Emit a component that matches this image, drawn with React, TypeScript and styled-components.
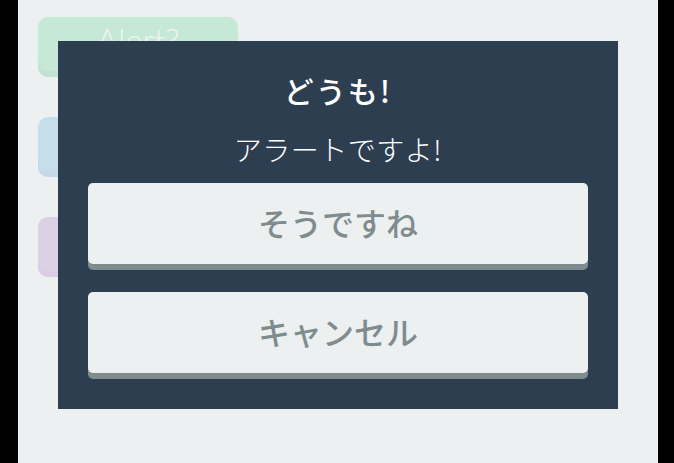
import styled, { createGlobalStyle } from "styled-components";

const GlobalStyle = createGlobalStyle`
  html, body {
    margin: 0;
    padding: 0;
    background: #000;
    font-family: "Noto Sans CJK JP", "Noto Sans", sans-serif;
  }
`;

const Page = styled.div`
  display: flex;
  height: 463px;
  padding-left: 18px;
  background: #000;
`;

const Panel = styled.div`
  position: relative;
  width: 640px;
  background: #ecf0f1;
  padding: 17px 20px;
  box-sizing: border-box;
  display: flex;
  flex-direction: column;
  gap: 40px;
`;

const AlertButton = styled.button<{ $color: string; $shade: string }>`
  width: 200px;
  height: 60px;
  border: none;
  border-radius: 10px;
  background: ${p => p.$color};
  box-shadow: inset 0 -6px 0 ${p => p.$shade};
  color: #fff;
  font-family: "Lato", "Liberation Sans", sans-serif;
  font-weight: 300;
  font-size: 33px;
  line-height: 1;
  padding: 0 0 14px;
  opacity: 0.2;
`;

const Dialog = styled.div`
  position: absolute;
  left: 40px;
  top: 41px;
  width: 560px;
  height: 368px;
  box-sizing: border-box;
  background: #2c3e50;
  padding: 30px 30px 0;
  display: flex;
  flex-direction: column;
  align-items: center;
  color: #fff;
`;

const Title = styled.h2`
  margin: 0;
  font-size: 30px;
  font-weight: 500;
  letter-spacing: 2px;
  line-height: 38px;
`;

const Message = styled.p`
  margin: 20px 0 14px;
  font-size: 28px;
  font-weight: 300;
  letter-spacing: 0.5px;
  line-height: 40px;
`;

const Actions = styled.div`
  display: flex;
  flex-direction: column;
  gap: 22px;
  width: 100%;
`;

const ActionButton = styled.button`
  height: 81px;
  border: none;
  border-radius: 5px;
  background: #ecf0f1;
  box-shadow: 0 6px 0 #7f8c8d;
  margin-bottom: 6px;
  color: #7f8c8d;
  font-family: "Noto Sans CJK JP", "Noto Sans", sans-serif;
  font-size: 32px;
  font-weight: 500;
  padding: 0 0 4px;
`;

export default function App() {
  return (
    <Page>
      <GlobalStyle />
      <Panel>
        <AlertButton $color="#2ecc71" $shade="#27ae60">Alert?</AlertButton>
        <AlertButton $color="#3498db" $shade="#2980b9">Confirm?</AlertButton>
        <AlertButton $color="#9b59b6" $shade="#8e44ad">Prompt?</AlertButton>
        <Dialog>
          <Title>どうも!</Title>
          <Message>アラートですよ!</Message>
          <Actions>
            <ActionButton>そうですね</ActionButton>
            <ActionButton>キャンセル</ActionButton>
          </Actions>
        </Dialog>
      </Panel>
    </Page>
  );
}
